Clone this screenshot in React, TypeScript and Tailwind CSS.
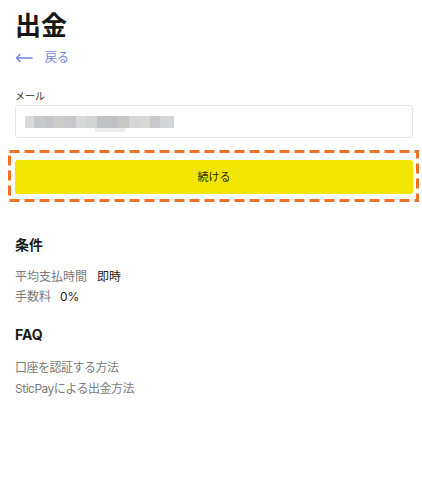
const blur = [
  ['#d9dadb', 9], ['#c8c9cb', 11], ['#c4c5c7', 9], ['#cdcbc8', 11], ['#c6c8cb', 11],
  ['#d7d8d8', 10], ['#d2d4d4', 11], ['#c1c2c4', 11], ['#bec0c2', 10], ['#c9c7c4', 11],
  ['#d4d6d8', 11], ['#d9d8d4', 10], ['#c7c9cc', 10], ['#d3d6d8', 14],
] as const;

function BlurredEmail() {
  return (
    <div className="relative flex h-[12px] blur-[0.5px]">
      {blur.map(([c, w], i) => (
        <div key={i} style={{ background: c, width: w }} className="h-full" />
      ))}
      <div className="absolute left-[70px] top-[12px] h-[4px] w-[30px] bg-[#ecedee]" />
    </div>
  );
}

export default function App() {
  return (
    <div
      className="min-h-[501px] bg-white pl-[15px] pr-[9px] pt-[10px] text-[#1f1f1f]"
      style={{ fontFamily: 'Inter, "Noto Sans CJK JP", sans-serif' }}
    >
      {/* Title */}
      <h1 className="text-[26px] font-bold leading-[32px] text-[#161616]">出金</h1>
      <a className="mt-[8px] flex items-center gap-[12px] text-[12px] leading-[16px] text-[#7384e0]">
        <svg width="18" height="10" viewBox="0 0 18 10" fill="none" stroke="currentColor" strokeWidth="1.5" strokeLinecap="round" strokeLinejoin="round">
          <path d="M17 5H1.5M5 1.5L1.5 5L5 8.5" />
        </svg>
        <span>戻る</span>
      </a>

      {/* Form */}
      <label className="mt-[23px] block text-[10px] leading-[14px] text-[#333]">メール</label>
      <div className="mt-[2px] flex h-[33px] items-center rounded-[3px] border border-[#e6e6e6] px-[9px]">
        <BlurredEmail />
      </div>

      <div className="relative -ml-[7px] -mr-[6px] mt-[12px] pb-[8px] pl-[7px] pr-[6px] pt-[10px]">
        <svg className="pointer-events-none absolute inset-0 h-full w-full" preserveAspectRatio="none">
          <rect x="1.5" y="1.5" width="calc(100% - 3px)" height="calc(100% - 3px)" fill="none" stroke="#ef7226" strokeWidth="3" strokeDasharray="10 5" />
        </svg>
        <button className="flex h-[34px] w-full items-center justify-center rounded-[3px] bg-[#f2e600] text-[11px] text-[#2a2a00]">
          続ける
        </button>
      </div>

      {/* Conditions */}
      <h2 className="mt-[33px] text-[14px] font-bold leading-[20px] text-[#1a1a1a]">条件</h2>
      <div className="mt-[12px] text-[12px] leading-[20px]">
        <div className="flex gap-[10px]">
          <span className="text-[#7a7a7a]">平均支払時間</span>
          <span className="text-[#222]">即時</span>
        </div>
        <div className="flex gap-[9px]">
          <span className="text-[#7a7a7a]">手数料</span>
          <span className="text-[#222]">0%</span>
        </div>
      </div>

      {/* FAQ */}
      <h2 className="mt-[18px] text-[14px] font-bold leading-[20px] text-[#1a1a1a]">FAQ</h2>
      <div className="mt-[12px] flex flex-col text-[12px] leading-[21px] tracking-[-0.5px] text-[#7a7a7a]">
        <a>口座を認証する方法</a>
        <a>SticPayによる出金方法</a>
      </div>
    </div>
  );
}
